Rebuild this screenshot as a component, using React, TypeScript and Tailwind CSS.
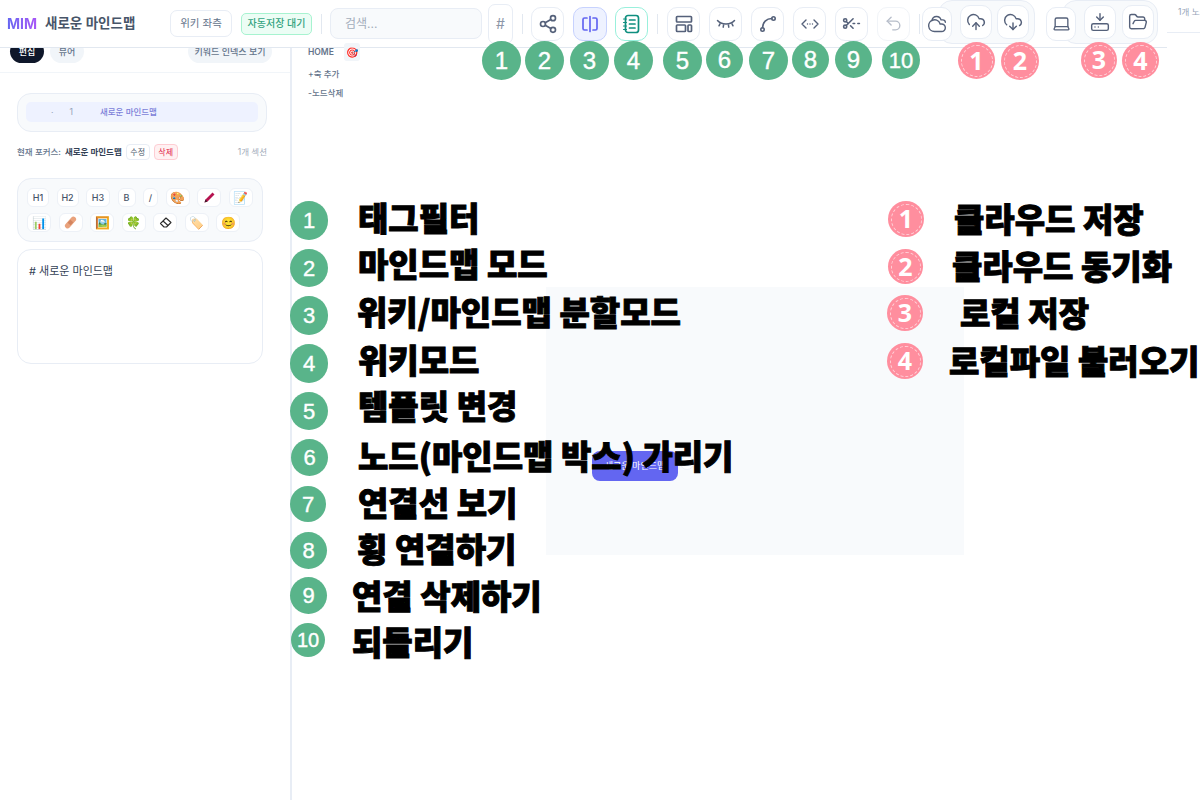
import type { ReactNode } from "react";
import {
  CloudDownload,
  CloudUpload,
  Cloudy,
  FolderOpen,
  HardDriveDownload,
  Laptop,
  ScissorsLineDashed,
  Share2,
  Undo2,
} from "lucide-react";

const toolBtn =
  "flex h-[34px] w-[33px] shrink-0 items-center justify-center rounded-[10px] border border-[#e8edf5] bg-white text-[#55617a]";

function SplitIcon() {
  return (
    <svg width="18" height="18" viewBox="0 0 18 18" fill="none" stroke="#6366f1" strokeWidth="1.7" strokeLinecap="round" strokeLinejoin="round">
      <path d="M6 3H3.5A1.5 1.5 0 0 0 2 4.5v9A1.5 1.5 0 0 0 3.5 15H6" />
      <path d="M12 3h2.500A1.5 1.5 0 0 1 16 4.5v9a1.5 1.5 0 0 1-1.5 1.5H12" />
      <path d="M9 1.5v15" />
    </svg>
  );
}

function WikiIcon() {
  return (
    <svg width="19" height="20" viewBox="0 0 19 20" fill="none" stroke="#0f8f7f" strokeWidth="1.7" strokeLinecap="round">
      <rect x="3.5" y="1.5" width="13" height="17" rx="2.5" />
      <path d="M7.5 6h5.5M7.5 10h5.5M7.5 14h5.5" />
      <path d="M1.5 5h3M1.5 8.5h3M1.5 12h3M1.5 15.5h3" strokeWidth="1.2" />
    </svg>
  );
}

function TemplateIcon() {
  return (
    <svg width="20" height="20" viewBox="0 0 20 20" fill="none" stroke="#55617a" strokeWidth="1.7" strokeLinejoin="round">
      <rect x="2.5" y="2.5" width="15" height="5.5" rx="0.8" />
      <rect x="2.5" y="11" width="9" height="6.5" rx="0.8" />
      <rect x="14" y="11" width="3.5" height="6.5" rx="0.8" />
    </svg>
  );
}

function LashesIcon() {
  return (
    <svg width="20" height="14" viewBox="0 0 20 14" fill="none" stroke="#55617a" strokeWidth="1.5" strokeLinecap="round">
      <path d="M1.5 3.5C5 8 15 8 18.500 3.5" />
      <path d="M4 6.800 3 8.800M7.600 8 7.200 10.200M12.400 8l.4 2.200M16 6.800l1 2" />
    </svg>
  );
}

function CurveIcon() {
  return (
    <svg width="18" height="18" viewBox="0 0 18 18" fill="none" stroke="#55617a" strokeWidth="1.6" strokeLinecap="round">
      <circle cx="3.5" cy="14.5" r="1.7" />
      <circle cx="14.5" cy="3.5" r="1.7" />
      <path d="M3.5 12.800C3.5 7.500 7.500 3.500 12.800 3.500" />
    </svg>
  );
}

function LinkArrowsIcon() {
  return (
    <svg width="18" height="12" viewBox="0 0 18 12" fill="none" stroke="#55617a" strokeWidth="1.4" strokeLinecap="round" strokeLinejoin="round">
      <path d="M5 2 1 6l4 4M13 2l4 4-4 4" />
      <path d="M6.500 6h.01M9 6h.01M11.500 6h.01" />
    </svg>
  );
}

function CrayonEmoji() {
  return (
    <svg width="13" height="13" viewBox="0 0 13 13">
      <path d="M9.500 1.500 11.500 3.500 4.500 10.500 1.500 11.500 2.500 8.500Z" fill="#b5124f" />
      <path d="M2.500 8.500 4.500 10.500 1.500 11.500Z" fill="#3f1a2a" />
    </svg>
  );
}

function BandageEmoji() {
  return (
    <svg width="13" height="13" viewBox="0 0 13 13">
      <rect x="3.800" y="-0.500" width="5.400" height="14" rx="2.700" fill="#e9a27c" transform="rotate(42 6.500 6.500)" />
      <rect x="4.500" y="4.500" width="4" height="4" fill="#d38560" transform="rotate(42 6.500 6.500)" />
    </svg>
  );
}

function EraserEmoji() {
  return (
    <svg width="13" height="12" viewBox="0 0 13 12" fill="#ffffff" stroke="#2b2b2b" strokeWidth="1.100" strokeLinejoin="round">
      <path d="M7 1 12 5.500 7.500 10 5 10 1.500 6.500Z" />
      <path d="M4 4 9 8.500" />
    </svg>
  );
}

function Badge({ n, className }: { n: number; className: string }) {
  return (
    <div className={`absolute flex items-center justify-center rounded-full bg-[#59b48a] font-['Liberation_Sans',sans-serif] font-normal text-white [-webkit-text-stroke:0.4px_white] ${className}`}>
      {n}
    </div>
  );
}

function RedBadge({ n, className }: { n: number; className: string }) {
  return (
    <div className={`absolute flex items-center justify-center rounded-full bg-[#ff8e9e] ${className}`}>
      <div className="flex h-[calc(100%-5px)] w-[calc(100%-5px)] items-center justify-center rounded-full border border-dashed border-[#ffd0d8] font-['Noto_Sans',sans-serif] text-[25px] font-bold text-white">
        {n}
      </div>
    </div>
  );
}

function Label({ children, className }: { children: ReactNode; className: string }) {
  return (
    <div className={`absolute whitespace-nowrap font-['Noto_Sans_CJK_KR',sans-serif] text-[33px] leading-[36px] font-black text-black [-webkit-text-stroke:1px_black] ${className}`}>
      {children}
    </div>
  );
}

function Chip({ children, className = "" }: { children: ReactNode; className?: string }) {
  return (
    <span className={`flex h-[19px] items-center justify-center rounded-[6px] border border-[#edf1f7] bg-white text-[9px] font-medium text-[#475569] ${className}`}>
      {children}
    </span>
  );
}

const chipsTop: [string, ReactNode, string][] = [
  ["h1", "H1", "w-[22px]"],
  ["h2", "H2", "w-[22px]"],
  ["h3", "H3", "w-[24px]"],
  ["b", "B", "w-[18px] font-extrabold text-[#1e293b]"],
  ["i", "/", "w-[15px] font-bold"],
  ["palette", "🎨", "w-[24px] text-[12px]"],
  ["crayon", <CrayonEmoji />, "w-[24px]"],
  ["memo", "📝", "w-[24px] text-[12px]"],
];
const chipsBottom: [string, ReactNode][] = [
  ["chart", "📊"],
  ["bandage", <BandageEmoji />],
  ["frame", "🖼️"],
  ["clover", "🍀"],
  ["eraser", <EraserEmoji />],
  ["tag", "🏷️"],
  ["smile", "😊"],
];

export default function App() {
  return (
    <div className="relative h-[800px] w-[1200px] overflow-hidden bg-white font-['Inter','Noto_Sans_CJK_KR',sans-serif]">
      <div className="flex h-[48px]">
        <header className="flex h-[48px] w-[1167px] shrink-0 items-center border-b border-[#e2e8f0] pl-[7px]">
          <span className="w-[30px] bg-gradient-to-r from-[#6366f1] to-[#a855f7] bg-clip-text text-[14px] font-bold text-transparent">MIM</span>
          <span className="ml-[8px] w-[92px] text-[13.5px] font-semibold whitespace-nowrap text-[#475569]">새로운 마인드맵</span>
          <button className="ml-[33px] h-[27px] w-[62px] rounded-[7px] border border-[#e8edf5] text-[10.5px] text-[#64748b]">위키 좌측</button>
          <span className="ml-[9px] flex h-[22px] w-[71px] items-center justify-center rounded-[5px] border border-[#a7f3d0] bg-[#ecfdf5] text-[10px] font-medium text-[#34a37f]">자동저장 대기</span>
          <span className="ml-[9px] h-[20px] w-px bg-[#e2e8f0]" />
          <div className="ml-[8px] flex h-[31px] w-[152px] items-center rounded-[8px] border border-[#e8edf5] bg-[#f8fafc] pl-[14px] text-[12px] text-[#a3adbb]">검색...</div>
          <div className="ml-[6px] flex h-[40px] w-[25px] items-center justify-center rounded-[7px] border border-[#e8edf5] text-[14px] text-[#8c96a8]">#</div>
          <span className="ml-[9px] h-[20px] w-px bg-[#e2e8f0]" />
          <div className={`ml-[8px] ${toolBtn}`}><Share2 size={20} strokeWidth={2} /></div>
          <div className="ml-[9px] flex h-[34px] w-[34px] items-center justify-center rounded-[10px] border border-[#c7d2fe] bg-[#eef2ff]"><SplitIcon /></div>
          <div className="ml-[8px] flex h-[34px] w-[33px] items-center justify-center rounded-[10px] border border-[#99f0dc] bg-white"><WikiIcon /></div>
          <span className="ml-[9px] h-[20px] w-px bg-[#e2e8f0]" />
          <div className={`ml-[9px] ${toolBtn}`}><TemplateIcon /></div>
          <div className={`ml-[9px] ${toolBtn}`}><LashesIcon /></div>
          <div className={`ml-[9px] ${toolBtn}`}><CurveIcon /></div>
          <div className={`ml-[9px] ${toolBtn}`}><LinkArrowsIcon /></div>
          <div className={`ml-[9px] ${toolBtn}`}><ScissorsLineDashed size={19} strokeWidth={2} /></div>
          <div className="ml-[9px] flex h-[34px] w-[33px] shrink-0 items-center justify-center rounded-[10px] border border-[#f1f4f8] bg-white text-[#b6bdc9]"><Undo2 size={19} strokeWidth={1.7} /></div>
          <span className="ml-[9px] h-[20px] w-px bg-[#e2e8f0]" />
          <div className="relative z-10 ml-[2px] flex h-[34px] w-[30px] shrink-0 items-center justify-center rounded-[10px] border border-[#e8edf5] bg-white text-[#55617a]"><Cloudy size={20} strokeWidth={1.7} /></div>
          <div className="-ml-[14px] flex h-[44px] w-[97px] shrink-0 -translate-y-[2px] items-center gap-[5px] rounded-[14px] border border-[#e8edf5] bg-[#f8fafc] pl-[21px]">
            <div className="flex h-[34px] w-[32px] items-center justify-center rounded-[10px] border border-[#e8edf5] bg-white text-[#55617a]"><CloudUpload size={20} strokeWidth={1.7} /></div>
            <div className="flex h-[34px] w-[32px] items-center justify-center rounded-[10px] border border-[#e8edf5] bg-white text-[#55617a]"><CloudDownload size={20} strokeWidth={1.7} /></div>
          </div>
          <div className="relative z-10 ml-[11px] flex h-[34px] w-[30px] shrink-0 items-center justify-center rounded-[10px] border border-[#e8edf5] bg-white text-[#55617a]"><Laptop size={19} strokeWidth={1.7} /></div>
          <div className="-ml-[14px] flex h-[44px] w-[96px] shrink-0 -translate-y-[2px] items-center gap-[6px] rounded-[14px] border border-[#e8edf5] bg-[#f8fafc] pl-[21px]">
            <div className="flex h-[34px] w-[32px] items-center justify-center rounded-[10px] border border-[#e8edf5] bg-white text-[#55617a]"><HardDriveDownload size={20} strokeWidth={1.7} /></div>
            <div className="flex h-[34px] w-[32px] items-center justify-center rounded-[10px] border border-[#e8edf5] bg-white text-[#55617a]"><FolderOpen size={20} strokeWidth={1.7} /></div>
          </div>
        </header>
        <div className="h-[33px] flex-1 overflow-hidden border-b border-[#e8edf5] pt-[6px] pl-[11px] text-[8.5px] whitespace-nowrap text-[#94a3b8]">1개 노드</div>
      </div>

      <div className="flex h-[752px]">
        <aside className="h-full w-[292px] shrink-0 overflow-hidden border-r-2 border-[#e8edf5]">
          <div className="flex h-[25px] items-start border-b border-[#f1f5f9] pr-[18px] pl-[10px]">
            <div className="-mt-[8px] flex h-[23px] w-full items-center text-[9px] font-medium">
              <span className="flex h-full w-[34px] items-center justify-center rounded-full bg-[#0f172a] text-white">편집</span>
              <span className="ml-[6px] flex h-full w-[34px] items-center justify-center rounded-full bg-[#f1f5f9] text-[#64748b]">뷰어</span>
              <span className="ml-auto flex h-full w-[84px] items-center justify-center rounded-full bg-[#f1f5f9] text-[#64748b]">키워드 인덱스 보기</span>
            </div>
          </div>

          <div className="mt-[20px] ml-[17px] h-[39px] w-[250px] rounded-[14px] border border-[#e8edf5] bg-[#f8fafc] p-[8px]">
            <div className="flex h-[20px] items-center rounded-[5px] bg-[#eef2ff] text-[8.5px] text-[#7c7fd8]">
              <span className="ml-[25px] text-[#94a3b8]">·</span>
              <span className="ml-[16px] text-[#94a3b8]">1</span>
              <span className="ml-[27px] font-medium">새로운 마인드맵</span>
            </div>
          </div>

          <div className="mt-[12px] ml-[17px] flex h-[16px] w-[250px] items-center text-[8.5px] whitespace-nowrap">
            <span className="font-medium text-[#64748b]">현재 포커스:</span>
            <span className="ml-[4px] font-bold text-[#334155]">새로운 마인드맵</span>
            <span className="ml-[4px] flex h-[16px] w-[24px] items-center justify-center rounded-[4px] border border-[#e8edf5] text-[8px] text-[#475569]">수정</span>
            <span className="ml-[4px] flex h-[16px] w-[24px] items-center justify-center rounded-[4px] border border-[#fecdd3] bg-[#fff1f2] text-[8px] text-[#e11d48]">삭제</span>
            <span className="ml-auto text-[8.5px] text-[#a3adbb]">1개 섹션</span>
          </div>

          <div className="mt-[18px] ml-[17px] flex h-[64px] w-[246px] flex-col gap-[6px] rounded-[14px] border border-[#e8edf5] bg-[#f8fafc] pt-[9px] pl-[9px]">
            <div className="flex gap-[7.5px]">
              {chipsTop.map(([k, t, c]) => (
                <Chip key={k} className={c}>{t}</Chip>
              ))}
            </div>
            <div className="flex gap-[7.5px]">
              {chipsBottom.map(([k, t]) => (
                <Chip key={k} className="w-[24px] text-[12px]">{t}</Chip>
              ))}
            </div>
          </div>

          <div className="mt-[7px] ml-[17px] h-[115px] w-[246px] rounded-[14px] border border-[#e8edf5] bg-white pt-[13px] pl-[11px] text-[11px] leading-[16px] text-[#334155]">
            # 새로운 마인드맵
          </div>
        </aside>

        <main className="relative flex-1 pl-[16px]">
          <div className="-mt-[5px] flex h-[18px] items-center text-[8.5px] font-semibold text-[#64748b]">
            <span className="w-[24px]">HOME</span>
            <span className="ml-[12px] flex h-[18px] w-[16px] items-center justify-center rounded-[3px] bg-[#f1f5f9] text-[10px]">🎯</span>
          </div>
          <div className="mt-[7px] text-[8.5px] leading-[12px] font-medium text-[#64748b]">+축 추가</div>
          <div className="mt-[7px] text-[8.5px] leading-[12px] font-medium text-[#64748b]">-노드삭제</div>

          <div className="absolute top-[239px] left-[254px] h-[268px] w-[418px] bg-[#f8fafc]">
            <div className="absolute top-[164px] left-[46px] flex h-[30px] w-[86px] items-center justify-center rounded-[8px] bg-[#6366f1] text-[9px] whitespace-nowrap text-white">새로운 마인드맵</div>
            <div className="absolute top-[169px] left-[134px] h-[14px] w-[14px] rounded-full border border-[#eef1f6] bg-white" />
          </div>
        </main>
      </div>

      <Badge n={1} className="top-[41px] left-[482px] h-[39px] w-[39px] text-[24px]" />
      <Badge n={2} className="top-[41px] left-[525px] h-[39px] w-[39px] text-[24px]" />
      <Badge n={3} className="top-[41px] left-[570px] h-[39px] w-[39px] text-[24px]" />
      <Badge n={4} className="top-[41px] left-[614px] h-[39px] w-[39px] text-[24px]" />
      <Badge n={5} className="top-[41px] left-[663px] h-[39px] w-[39px] text-[24px]" />
      <Badge n={6} className="top-[41px] left-[706px] h-[37px] w-[37px] text-[24px]" />
      <Badge n={7} className="top-[41px] left-[749px] h-[39px] w-[39px] text-[24px]" />
      <Badge n={8} className="top-[41px] left-[792px] h-[37px] w-[37px] text-[24px]" />
      <Badge n={9} className="top-[41px] left-[835px] h-[37px] w-[37px] text-[24px]" />
      <Badge n={10} className="top-[41px] left-[882px] h-[38px] w-[38px] text-[22px]" />

      <RedBadge n={1} className="top-[42px] left-[958px] h-[37px] w-[37px]" />
      <RedBadge n={2} className="top-[42px] left-[1001px] h-[38px] w-[38px]" />
      <RedBadge n={3} className="top-[42px] left-[1081px] h-[36px] w-[36px]" />
      <RedBadge n={4} className="top-[42px] left-[1122px] h-[37px] w-[37px]" />

      <Badge n={1} className="top-[201px] left-[290px] h-[39px] w-[38px] text-[22px]" />
      <Badge n={2} className="top-[249px] left-[290px] h-[38px] w-[38px] text-[22px]" />
      <Badge n={3} className="top-[296px] left-[290px] h-[39px] w-[38px] text-[22px]" />
      <Badge n={4} className="top-[344px] left-[290px] h-[39px] w-[38px] text-[22px]" />
      <Badge n={5} className="top-[392px] left-[290px] h-[38px] w-[38px] text-[22px]" />
      <Badge n={6} className="top-[439px] left-[291px] h-[37px] w-[37px] text-[22px]" />
      <Badge n={7} className="top-[486px] left-[290px] h-[36px] w-[36px] text-[22px]" />
      <Badge n={8} className="top-[532px] left-[290px] h-[37px] w-[37px] text-[22px]" />
      <Badge n={9} className="top-[577px] left-[290px] h-[37px] w-[37px] text-[22px]" />
      <Badge n={10} className="top-[623px] left-[291px] h-[34px] w-[34px] text-[20px]" />

      <Label className="top-[199px] left-[358px]">태그필터</Label>
      <Label className="top-[245px] left-[358px]">마인드맵 모드</Label>
      <Label className="top-[293px] left-[357px]">위키/마인드맵 분할모드</Label>
      <Label className="top-[341px] left-[358px]">위키모드</Label>
      <Label className="top-[387px] left-[358px]">템플릿 변경</Label>
      <Label className="top-[437px] left-[358px]">노드(마인드맵 박스) 가리기</Label>
      <Label className="top-[484px] left-[358px]">연결선 보기</Label>
      <Label className="top-[530px] left-[357px]">횡 연결하기</Label>
      <Label className="top-[577px] left-[352px]">연결 삭제하기</Label>
      <Label className="top-[623px] left-[352px]">되돌리기</Label>

      <RedBadge n={1} className="top-[201px] left-[888px] h-[36px] w-[36px]" />
      <RedBadge n={2} className="top-[249px] left-[888px] h-[35px] w-[35px]" />
      <RedBadge n={3} className="top-[295px] left-[887px] h-[36px] w-[36px]" />
      <RedBadge n={4} className="top-[343px] left-[887px] h-[36px] w-[36px]" />

      <Label className="top-[200px] left-[954px]">클라우드 저장</Label>
      <Label className="top-[247px] left-[952px]">클라우드 동기화</Label>
      <Label className="top-[294px] left-[960px]">로컬 저장</Label>
      <Label className="top-[342px] left-[949px]">로컬파일 불러오기</Label>
    </div>
  );
}
